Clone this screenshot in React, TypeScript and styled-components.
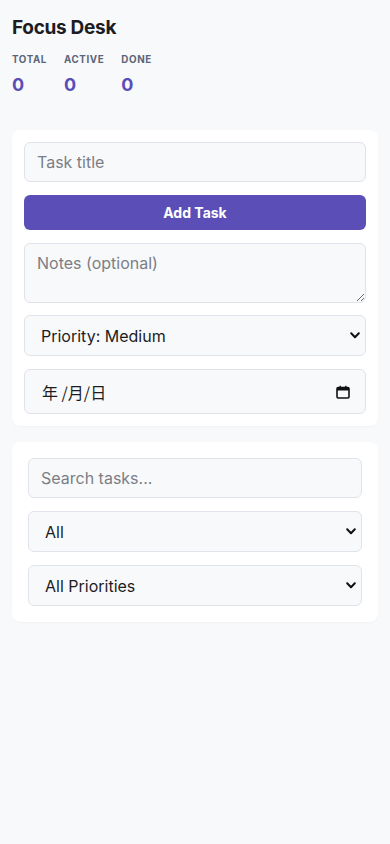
import React, { useState } from 'react'
import styled, { createGlobalStyle } from 'styled-components'

const GlobalStyle = createGlobalStyle`
  html, body {
    margin: 0;
    padding: 0;
    background: #f8f9fb;
  }
  body {
    font-family: Inter, "Noto Sans", "Noto Sans CJK SC", sans-serif;
    color: #1c1d22;
  }
  * { box-sizing: border-box; }
`

const Page = styled.div`
  min-height: 844px;
  padding: 16px 12px 24px;
  display: flex;
  flex-direction: column;
`

const Title = styled.h1`
  margin: 0;
  font-size: 19px;
  line-height: 23px;
  font-weight: 700;
  letter-spacing: -0.3px;
  color: #1c1d22;
`

const Stats = styled.div`
  display: flex;
  gap: 17px;
  margin-top: 15px;
`

const Stat = styled.div`
  display: flex;
  flex-direction: column;
  gap: 8px;
`

const StatLabel = styled.div`
  font-size: 9.8px;
  line-height: 12px;
  font-weight: 700;
  letter-spacing: 0.6px;
  text-transform: uppercase;
  color: #5b6579;
`

const StatValue = styled.div`
  font-size: 18px;
  line-height: 22px;
  font-weight: 700;
  color: #5a4db6;
`

const Card = styled.section<{ $pad: number }>`
  background: #ffffff;
  border-radius: 8px;
  padding: ${p => p.$pad}px;
  display: flex;
  flex-direction: column;
  gap: 13px;
  box-shadow: 0 1px 2px rgba(20, 24, 40, 0.03);
`

const FormCard = styled(Card)`
  margin-top: 34px;
  gap: 12.75px;
`

const FilterCard = styled(Card)`
  margin-top: 16px;
`

const fieldBase = `
  width: 100%;
  border: 1px solid #e0e3e9;
  border-radius: 6px;
  background-color: #f8f9fb;
  font-family: Inter, "Noto Sans", "Noto Sans CJK SC", sans-serif;
  font-size: 16px;
  color: #1c1d22;
  outline: none;
  margin: 0;
  &::placeholder { color: #7b7e85; }
`

const TextInput = styled.input<{ $h: number }>`
  ${fieldBase}
  height: ${p => p.$h}px;
  padding: 0 12px;
`

const NotesArea = styled.textarea`
  ${fieldBase}
  height: 60px;
  padding: 9px 12px;
  resize: vertical;
  display: block;
`

const chevron =
  "url(\"data:image/svg+xml;utf8,<svg xmlns='http://www.w3.org/2000/svg' width='10' height='7' viewBox='0 0 10 7'><path d='M1.2 1.3 L5 5.2 L8.8 1.3' fill='none' stroke='%23111' stroke-width='2' stroke-linecap='round' stroke-linejoin='round'/></svg>\")"

const Select = styled.select`
  ${fieldBase}
  height: 41px;
  padding: 0 28px 0 16px;
  appearance: none;
  -webkit-appearance: none;
  background-image: ${chevron};
  background-repeat: no-repeat;
  background-position: right 5px center;
  background-size: 10px 7px;
`

const DateBox = styled.label`
  ${fieldBase}
  height: 45px;
  padding: 0 15px 0 17px;
  display: flex;
  align-items: center;
  justify-content: space-between;
  cursor: pointer;
`

const DateText = styled.span`
  font-size: 16px;
  color: #1c1d22;
  font-family: "Noto Sans CJK SC", sans-serif;
`

const AddButton = styled.button`
  height: 35px;
  border: none;
  border-radius: 6px;
  background: #5b4fb7;
  color: #ffffff;
  font-family: Inter, "Noto Sans", sans-serif;
  font-size: 14px;
  font-weight: 700;
  cursor: pointer;
`

const CalendarIcon = () => (
  <svg width="14" height="14" viewBox="0 0 14 14" aria-hidden>
    <rect x="1" y="2.5" width="12" height="10.5" rx="1.2" fill="none" stroke="#111" strokeWidth="1.6" />
    <rect x="1" y="2.5" width="12" height="3" fill="#111" />
    <rect x="3.5" y="0.8" width="1.4" height="2.4" fill="#111" />
    <rect x="9.1" y="0.8" width="1.4" height="2.4" fill="#111" />
  </svg>
)

export default function App() {
  const [title, setTitle] = useState('')
  const [notes, setNotes] = useState('')
  const [priority, setPriority] = useState('medium')
  const [search, setSearch] = useState('')
  const [status, setStatus] = useState('all')
  const [prio, setPrio] = useState('all')

  return (
    <Page>
      <GlobalStyle />
      <Title>Focus Desk</Title>
      <Stats>
        <Stat>
          <StatLabel>Total</StatLabel>
          <StatValue>0</StatValue>
        </Stat>
        <Stat>
          <StatLabel>Active</StatLabel>
          <StatValue>0</StatValue>
        </Stat>
        <Stat>
          <StatLabel>Done</StatLabel>
          <StatValue>0</StatValue>
        </Stat>
      </Stats>

      <FormCard $pad={12}>
        <TextInput $h={40} placeholder="Task title" value={title} onChange={e => setTitle(e.target.value)} />
        <AddButton>Add Task</AddButton>
        <NotesArea placeholder="Notes (optional)" value={notes} onChange={e => setNotes(e.target.value)} />
        <Select value={priority} onChange={e => setPriority(e.target.value)}>
          <option value="low">Priority: Low</option>
          <option value="medium">Priority: Medium</option>
          <option value="high">Priority: High</option>
        </Select>
        <DateBox>
          <DateText>年 /月/日</DateText>
          <CalendarIcon />
        </DateBox>
      </FormCard>

      <FilterCard $pad={16}>
        <TextInput $h={40} placeholder="Search tasks..." value={search} onChange={e => setSearch(e.target.value)} />
        <Select value={status} onChange={e => setStatus(e.target.value)}>
          <option value="all">All</option>
          <option value="active">Active</option>
          <option value="done">Done</option>
        </Select>
        <Select value={prio} onChange={e => setPrio(e.target.value)}>
          <option value="all">All Priorities</option>
          <option value="high">High</option>
          <option value="medium">Medium</option>
          <option value="low">Low</option>
        </Select>
      </FilterCard>
    </Page>
  )
}
